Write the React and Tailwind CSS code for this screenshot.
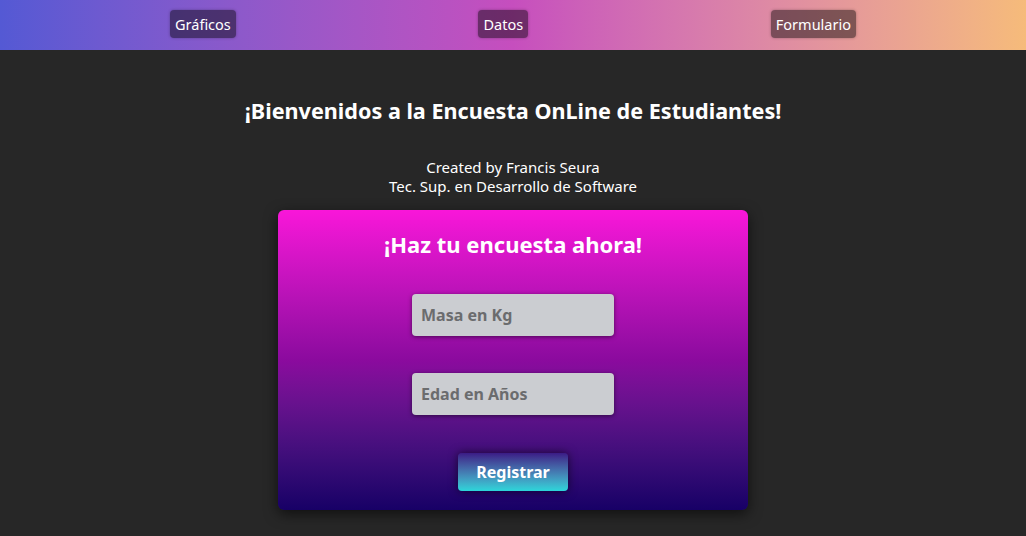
import React from "react";

const font = { fontFamily: "'Noto Sans', 'Open Sans', sans-serif" };

const NavButton = ({ label }) => (
  <button className="h-[28px] rounded-[4px] bg-black/45 px-[5px] text-[14.5px] leading-none text-white shadow-[0_0_3px_rgba(0,0,0,0.3)]">
    {label}
  </button>
);

const App = () => {
  return (
    <div
      className="flex min-h-[536px] w-full flex-col bg-[#272727] text-white"
      style={font}
    >
      <header className="flex h-[50px] items-center justify-between bg-gradient-to-r from-[#5459d4] via-[#c64ebe] to-[#f6bb7a] px-[170px] pb-[2px]">
        <NavButton label="Gráficos" />
        <NavButton label="Datos" />
        <NavButton label="Formulario" />
      </header>

      <main className="flex flex-col items-center">
        <h1 className="mt-[47px] text-[21.6px] font-bold leading-[28px]">
          ¡Bienvenidos a la Encuesta OnLine de Estudiantes!
        </h1>
        <div className="mt-[33px] text-center text-[15px] leading-[19px]">
          <p>Created by Francis Seura</p>
          <p>Tec. Sup. en Desarrollo de Software</p>
        </div>

        <form
          className="mt-[14px] flex h-[300px] w-[470px] flex-col items-center rounded-[6px] bg-gradient-to-b from-[#f916d9] via-[#8b0a9e] to-[#170066] shadow-[0_4px_14px_rgba(0,0,0,0.6)]"
          onSubmit={(e) => e.preventDefault()}
        >
          <h2 className="mt-[20px] text-[22px] font-bold leading-[28px]">
            ¡Haz tu encuesta ahora!
          </h2>
          <input
            className="mt-[36px] h-[42px] w-[202px] rounded-[4px] bg-[#cbcdd1] px-[9px] text-[16px] font-bold text-[#555] shadow-[0_1px_4px_rgba(0,0,0,0.5)] outline-none placeholder:text-[#6b6c6e]"
            placeholder="Masa en Kg"
          />
          <input
            className="mt-[37px] h-[42px] w-[202px] rounded-[4px] bg-[#cbcdd1] px-[9px] text-[16px] font-bold text-[#555] shadow-[0_1px_4px_rgba(0,0,0,0.5)] outline-none placeholder:text-[#6b6c6e]"
            placeholder="Edad en Años"
          />
          <button
            type="submit"
            className="mt-[38px] h-[38px] w-[110px] rounded-[4px] bg-gradient-to-b from-[#3b1a86] to-[#2bd6da] text-[16px] font-bold text-white shadow-[0_0_10px_rgba(0,0,0,0.6)]"
          >
            Registrar
          </button>
        </form>
      </main>
    </div>
  );
};

export default App;
